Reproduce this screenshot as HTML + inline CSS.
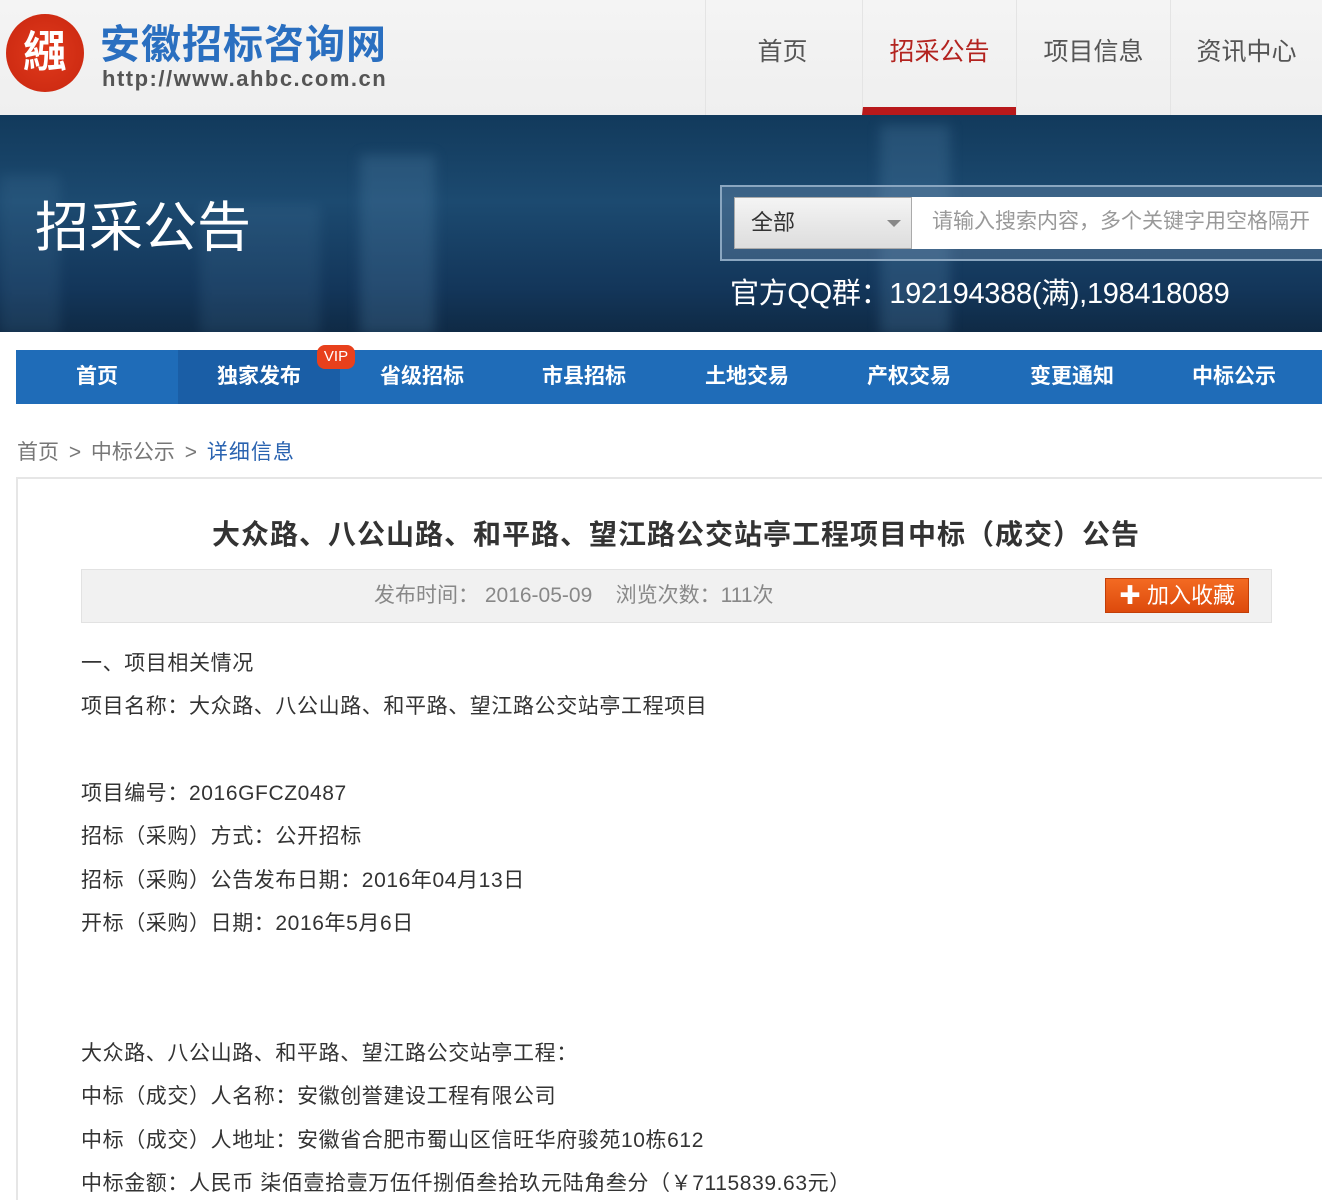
<!DOCTYPE html>
<html style="width:1322px;height:1200px;overflow:hidden"><head><meta charset="utf-8"><style>
*{margin:0;padding:0;box-sizing:border-box}
body{width:1322px;height:1200px;overflow:hidden;background:#fff;font-family:"Liberation Sans","Noto Sans CJK SC",sans-serif;position:relative}
.top{position:absolute;left:0;top:0;width:1322px;height:115px;background:linear-gradient(#f4f4f4,#efefef)}
.logo{position:absolute;left:6px;top:14px;width:78px;height:78px;border-radius:50%;background:radial-gradient(#e03a1c,#c8260f);color:#fff;font-size:44px;line-height:78px;text-align:center;font-weight:bold}
.lt{position:absolute;left:100px;top:12px;font-size:40px;font-weight:bold;color:#2a6fc0;letter-spacing:1px}
.url{position:absolute;left:102px;top:66px;font-size:22px;font-weight:bold;color:#555;letter-spacing:1.5px}
.tab{position:absolute;top:0;height:115px;width:154px;text-align:center;line-height:105px;font-size:25px;color:#555;border-left:1px solid #e4e4e4}
.tab.a{color:#b3231f;border-bottom:8px solid #b8191b}
.banner{position:absolute;left:0;top:115px;width:1322px;height:217px;background:linear-gradient(180deg,#123a5c 0%,#1c4a70 40%,#13365a 80%,#0f2a45 100%);overflow:hidden}
.bld{position:absolute;background:rgba(90,140,180,.25);filter:blur(6px)}
.btitle{position:absolute;left:35px;top:68px;font-size:54px;color:#fff}
.sbox{position:absolute;left:720px;top:70px;width:610px;height:76px;border:2px solid #8aa6c0;background:rgba(120,150,180,.35)}
.sel{position:absolute;left:12px;top:10px;width:178px;height:52px;background:linear-gradient(#f4f4f4,#ddd);border:1px solid #aaa;font-size:22px;line-height:50px;padding-left:16px;color:#333}
.sel:after{content:"";position:absolute;right:10px;top:22px;border:7px solid transparent;border-top-color:#888}
.inp{position:absolute;left:190px;top:10px;width:420px;height:52px;background:#fff;font-size:21px;line-height:50px;padding-left:20px;color:#999;white-space:nowrap}
.qq{position:absolute;left:730px;top:155px;font-size:29px;color:#fff;letter-spacing:-0.3px}
.nav{position:absolute;left:16px;top:350px;width:1306px;height:54px;background:#1f6cb8}
.nav div{position:absolute;top:0;width:162px;height:54px;text-align:center;line-height:54px;color:#fff;font-size:21px;font-weight:bold}
.vip{position:absolute;left:317px;top:345px;width:38px;height:24px;background:#e8401c;border-radius:8px;color:#fff;font-size:15px;text-align:center;line-height:24px}
.bc{position:absolute;left:17px;top:436px;font-size:21px;color:#777;word-spacing:4px}
.box{position:absolute;left:16px;top:477px;width:1306px;height:723px;border:2px solid #e6e6e6;border-right:none;border-bottom:none}
h1{position:absolute;left:0;width:1352px;top:513px;text-align:center;font-size:28px;color:#333;font-weight:bold;letter-spacing:1px}
.meta{position:absolute;left:81px;top:569px;width:1191px;height:54px;background:#f1f1f1;border:1px solid #e2e2e2;font-size:21px;color:#888;line-height:52px}
.btn{position:absolute;left:1105px;top:578px;width:144px;height:35px;background:linear-gradient(#f36a22,#dd4a0c);border:1px solid #c23e08;color:#fff;font-size:22px;line-height:33px;text-align:center}
.p{position:absolute;left:81px;font-size:21px;color:#333;white-space:nowrap;letter-spacing:0.6px}
</style></head><body>
<div class="top">
<div class="logo">繦</div>
<div class="lt">安徽招标咨询网</div>
<div class="url">http://www.ahbc.com.cn</div>
<div class="tab" style="left:705px">首页</div>
<div class="tab a" style="left:862px">招采公告</div>
<div class="tab" style="left:1016px">项目信息</div>
<div class="tab" style="left:1170px;width:152px">资讯中心</div>
</div>
<div class="banner">
<div class="bld" style="left:360px;top:40px;width:75px;height:180px"></div>
<div class="bld" style="left:880px;top:10px;width:70px;height:210px"></div>
<div class="bld" style="left:200px;top:90px;width:120px;height:130px;opacity:.6"></div>
<div class="bld" style="left:0;top:60px;width:60px;height:160px;opacity:.6"></div>
<div class="btitle">招采公告</div>
<div class="sbox"><div class="sel">全部</div><div class="inp">请输入搜索内容，多个关键字用空格隔开</div></div>
<div class="qq">官方QQ群：192194388(满),198418089</div>
</div>
<div class="nav">
<div style="left:0">首页</div>
<div style="left:162px;background:#1a5ea6">独家发布</div>
<div style="left:325px">省级招标</div>
<div style="left:487px">市县招标</div>
<div style="left:650px">土地交易</div>
<div style="left:812px">产权交易</div>
<div style="left:975px">变更通知</div>
<div style="left:1137px">中标公示</div>
</div>
<div class="vip">VIP</div>
<div class="bc">首页 &gt; 中标公示 &gt; <span style="color:#2a63b0;letter-spacing:1px">详细信息</span></div>
<div class="box"></div>
<h1>大众路、八公山路、和平路、望江路公交站亭工程项目中标（成交）公告</h1>
<div class="meta"><span style="position:absolute;left:292px">发布时间： 2016-05-09 &nbsp;&nbsp; 浏览次数：111次</span></div>
<div class="btn">✚ 加入收藏</div>
<div class="p" style="top:647px">一、项目相关情况</div>
<div class="p" style="top:690px">项目名称：大众路、八公山路、和平路、望江路公交站亭工程项目</div>
<div class="p" style="top:777px">项目编号：2016GFCZ0487</div>
<div class="p" style="top:820px">招标（采购）方式：公开招标</div>
<div class="p" style="top:864px">招标（采购）公告发布日期：2016年04月13日</div>
<div class="p" style="top:907px">开标（采购）日期：2016年5月6日</div>
<div class="p" style="top:1037px">大众路、八公山路、和平路、望江路公交站亭工程：</div>
<div class="p" style="top:1080px">中标（成交）人名称：安徽创誉建设工程有限公司</div>
<div class="p" style="top:1124px">中标（成交）人地址：安徽省合肥市蜀山区信旺华府骏苑10栋612</div>
<div class="p" style="top:1167px">中标金额：人民币 柒佰壹拾壹万伍仟捌佰叁拾玖元陆角叁分（￥7115839.63元）</div>
</body></html>
